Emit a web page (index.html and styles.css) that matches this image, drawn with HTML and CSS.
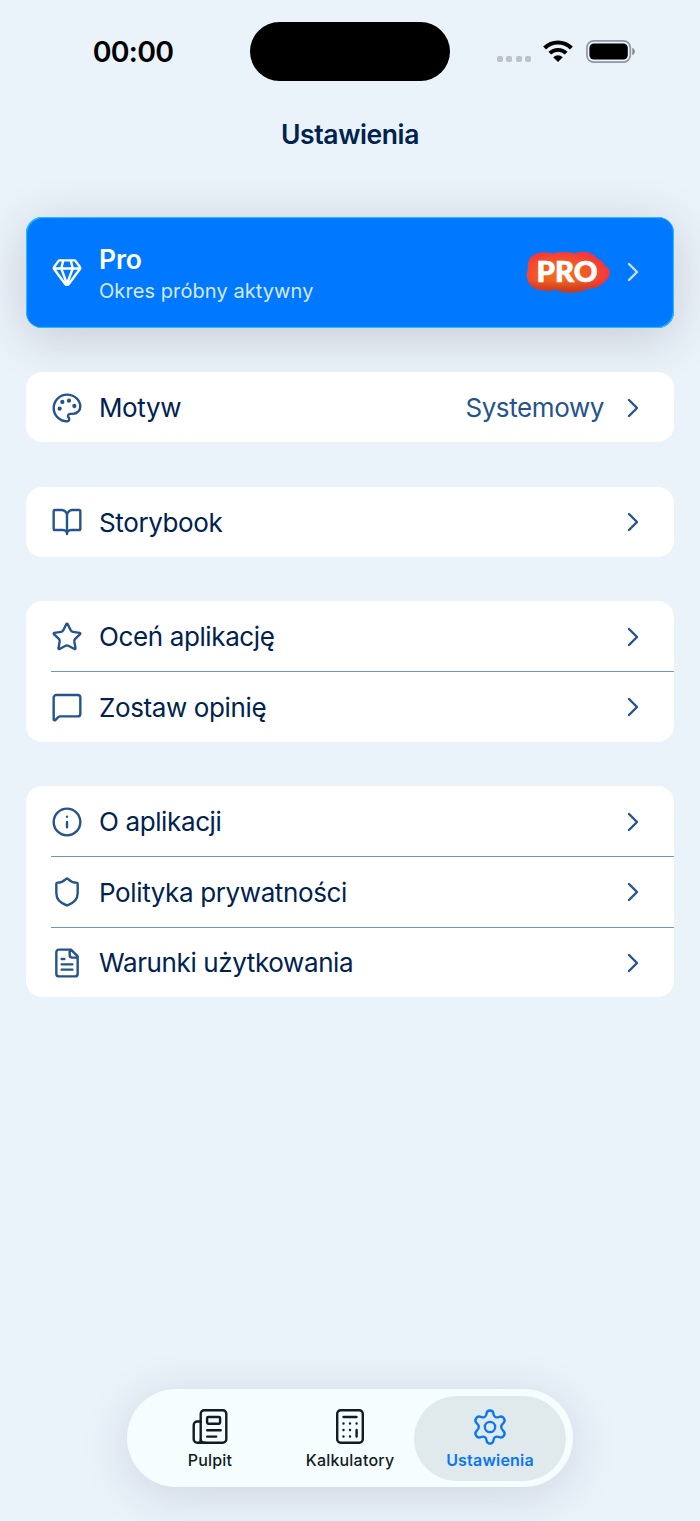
FILE: index.html
```
<!DOCTYPE html>
<html lang="pl">
<head>
<meta charset="utf-8">
<title>Ustawienia</title>
<link rel="stylesheet" href="styles.css">
</head>
<body>
<svg class="defs" width="0" height="0">
  <symbol id="chev" viewBox="0 0 12 20"><path d="M2 2l8 8-8 8"/></symbol>
</svg>
<div class="screen">
  <div class="status">
    <span class="time">00:00</span>
    <div class="island"></div>
    <div class="indicators">
      <div class="dots"><i></i><i></i><i></i><i></i></div>
      <svg class="wifi" viewBox="0 0 30 22" width="30" height="22">
        <path d="M1.6 8A19 19 0 0 1 28.4 8" stroke="#000" stroke-width="4.1" fill="none"/>
        <path d="M6.8 13.2A11.8 11.8 0 0 1 23.2 13.2" stroke="#000" stroke-width="3.9" fill="none"/>
        <path d="M10.2 17.2Q15 13.2 19.8 17.2L15 22z"/>
      </svg>
      <svg class="battery" viewBox="0 0 50 23" width="50" height="23">
        <rect x=".9" y=".9" width="43.4" height="21.2" rx="6.8" fill="none" stroke="#93989e" stroke-width="1.7"/>
        <rect x="3.4" y="3.4" width="38.4" height="16.2" rx="4.6"/>
        <path d="M46.3 7.8q2.6 1 2.6 3.7t-2.6 3.7z" fill="#83888e"/>
      </svg>
    </div>
  </div>
  <h1 class="title">Ustawienia</h1>

  <main class="list">
    <section class="pro">
      <svg class="icon" viewBox="0 0 24 24"><path d="M6 3.300h12l3.700 5a1.400 1.400 0 0 1 0 1.500L13.500 20.800a1.800 1.800 0 0 1-3 0L2.300 9.800a1.400 1.400 0 0 1 0-1.500zM2.200 9.400h19.600M9.200 3.300L7.700 9.400 12 21l4.300-11.600L14.800 3.300"/></svg>
      <div class="pro-copy">
        <strong class="pro-name">Pro</strong>
        <span class="pro-sub">Okres próbny aktywny</span>
      </div>
      <svg class="badge" viewBox="0 0 86 44" width="86" height="44">
        <defs>
          <radialGradient id="flame" cx=".42" cy=".54" r=".58">
            <stop offset="0" stop-color="#f6701c"/><stop offset=".5" stop-color="#f35a22"/><stop offset="1" stop-color="#f5343e"/>
          </radialGradient>
          <linearGradient id="shade" x1="0" y1="0" x2="0" y2="1">
            <stop offset=".7" stop-color="#b53a18" stop-opacity="0"/><stop offset="1" stop-color="#b53a18" stop-opacity=".85"/>
          </linearGradient>
          <path id="cloud" d="M3 19C1 9 9 1.500 20 2.200Q25 2.500 28 3.500Q39 .6 49 3.500C58 0 68 2 72 8.500Q78 10 79.500 15.500C84 17.500 86 22 84 26Q81.500 31.500 77 33.500Q74 38 67 38Q61 39 57.500 41Q42 45 31 39.500C22 42 8 41 4 33Q0 27 3 19z"/>
        </defs>
        <use href="#cloud" fill="url(#flame)"/><use href="#cloud" fill="url(#shade)"/>
        <text class="badge-text" x="11.500" y="32.300" textLength="61" lengthAdjust="spacingAndGlyphs">PRO</text>
      </svg>
      <svg class="chev"><use href="#chev"/></svg>
    </section>

    <section class="card">
      <div class="row">
        <svg class="icon" viewBox="0 0 24 24"><path d="M12 2C6.500 2 2 6.500 2 12s4.500 10 10 10c.926 0 1.648-.746 1.648-1.688 0-.437-.18-.835-.437-1.125-.29-.289-.438-.652-.438-1.125a1.640 1.640 0 0 1 1.668-1.668h1.996c3.051 0 5.555-2.503 5.555-5.554C21.965 6.012 17.461 2 12 2z"/><g class="solid"><circle cx="13.500" cy="6.500" r=".7"/><circle cx="17.500" cy="10.500" r=".7"/><circle cx="8.500" cy="7.500" r=".7"/><circle cx="6.500" cy="12.500" r=".7"/></g></svg>
        <span class="label">Motyw</span>
        <span class="value">Systemowy</span>
        <svg class="chev"><use href="#chev"/></svg>
      </div>
    </section>

    <section class="card">
      <div class="row">
        <svg class="icon" viewBox="0 0 24 24"><path d="M12 7v14M3 18a1 1 0 0 1-1-1V4a1 1 0 0 1 1-1h5a4 4 0 0 1 4 4 4 4 0 0 1 4-4h5a1 1 0 0 1 1 1v13a1 1 0 0 1-1 1h-6a3 3 0 0 0-3 3 3 3 0 0 0-3-3z"/></svg>
        <span class="label">Storybook</span>
        <svg class="chev"><use href="#chev"/></svg>
      </div>
    </section>

    <section class="card">
      <div class="row">
        <svg class="icon" viewBox="0 0 24 24"><path d="M11.525 2.295a.53.53 0 0 1 .95 0l2.310 4.679a2.123 2.123 0 0 0 1.595 1.160l5.166.756a.53.53 0 0 1 .294.904l-3.736 3.638a2.123 2.123 0 0 0-.611 1.878l.882 5.140a.53.53 0 0 1-.771.560l-4.618-2.428a2.122 2.122 0 0 0-1.973 0L6.396 21.010a.53.53 0 0 1-.770-.560l.881-5.139a2.122 2.122 0 0 0-.611-1.879L2.160 9.795a.53.53 0 0 1 .294-.906l5.165-.755a2.122 2.122 0 0 0 1.597-1.160z"/></svg>
        <span class="label">Oceń aplikację</span>
        <svg class="chev"><use href="#chev"/></svg>
      </div>
      <div class="row">
        <svg class="icon" viewBox="0 0 24 24"><path d="M22 17a2 2 0 0 1-2 2H6.828a2 2 0 0 0-1.414.586l-2.202 2.202A.71.71 0 0 1 2 21.286V5a2 2 0 0 1 2-2h16a2 2 0 0 1 2 2z"/></svg>
        <span class="label">Zostaw opinię</span>
        <svg class="chev"><use href="#chev"/></svg>
      </div>
    </section>

    <section class="card">
      <div class="row">
        <svg class="icon" viewBox="0 0 24 24"><circle cx="12" cy="12" r="10"/><path d="M12 16v-4M12 8h.01"/></svg>
        <span class="label">O aplikacji</span>
        <svg class="chev"><use href="#chev"/></svg>
      </div>
      <div class="row">
        <svg class="icon" viewBox="0 0 24 24"><path d="M20 13c0 5-3.500 7.500-7.660 8.950a1 1 0 0 1-.670-.010C7.500 20.500 4 18 4 13V6a1 1 0 0 1 1-1c2 0 4.500-1.200 6.240-2.720a1.170 1.170 0 0 1 1.520 0C14.510 3.810 17 5 19 5a1 1 0 0 1 1 1z"/></svg>
        <span class="label">Polityka prywatności</span>
        <svg class="chev"><use href="#chev"/></svg>
      </div>
      <div class="row">
        <svg class="icon" viewBox="0 0 24 24"><path d="M15 2H6a2 2 0 0 0-2 2v16a2 2 0 0 0 2 2h12a2 2 0 0 0 2-2V7zM14 2v4a2 2 0 0 0 2 2h4M10 9H8M16 13H8M16 17H8"/></svg>
        <span class="label">Warunki użytkowania</span>
        <svg class="chev"><use href="#chev"/></svg>
      </div>
    </section>
  </main>

  <nav class="tabs">
    <div class="tab">
      <svg class="tab-icon" viewBox="0 0 36 36"><rect x="8.700" y="1.200" width="25.600" height="32.600" rx="3.500"/><path d="M8.700 12.500H5.200A3.500 3.500 0 0 0 1.700 16v14.300a3.500 3.500 0 0 0 3.500 3.500h1A2.500 2.500 0 0 0 8.700 31.300M6 33.800h7M15.200 21.300H28.700M15.200 27.600h9"/><rect x="15.100" y="8" width="13" height="6.800" rx="1.200"/></svg>
      <span class="tab-label">Pulpit</span>
    </div>
    <div class="tab">
      <svg class="tab-icon" viewBox="0 0 36 36"><rect x="5.200" y="1.200" width="25.600" height="32.600" rx="3.500"/><path d="M11.500 8h13M24.600 21v6.600M11.500 14.500h.01M18 14.500h.01M24.600 14.500h.01M11.500 21h.01M18 21h.01M11.500 27.500h.01M18 27.500h.01"/></svg>
      <span class="tab-label">Kalkulatory</span>
    </div>
    <div class="tab active">
      <svg class="tab-icon gear" viewBox="1.200 1.200 21.600 21.600"><path d="M9.9 4.100C10.200 1.400 13.800 1.400 14.100 4.100C14.300 5.900 15.700 6.700 17.300 6C19.800 4.900 21.900 7.800 20 9.700C18.300 11.300 18.300 12.700 20 14.300C21.900 16.200 19.800 19.100 17.300 18C15.700 17.300 14.300 18.100 14.100 19.900C13.800 22.600 10.200 22.600 9.900 19.900C9.700 18.100 8.300 17.300 6.700 18C4.200 19.100 2.100 16.200 4 14.300C5.700 12.700 5.700 11.300 4 9.700C2.100 7.800 4.200 4.900 6.700 6C8.300 6.700 9.700 5.900 9.900 4.100z"/><circle cx="12" cy="12" r="3.100"/></svg>
      <span class="tab-label">Ustawienia</span>
    </div>
  </nav>
</div>
</body>
</html>
```
FILE: styles.css
```
* { box-sizing: border-box; }
body { margin: 0; background: #eaf2fa; font-family: Inter, "Liberation Sans", sans-serif; color: #00224f; }
.defs { position: absolute; }
.screen { width: 700px; height: 1521px; display: flex; flex-direction: column; overflow: hidden; }

.status { height: 103px; display: grid; grid-template-columns: 250px 200px 250px; align-items: center; flex: none; }
.time { color: #000; font-size: 28.500px; font-weight: 600; text-align: center; padding: 0 0 0 16px; letter-spacing: -.8px; }
.island { height: 58.500px; border-radius: 29.5px; background: #000; }
.indicators { display: flex; align-items: center; padding-left: 46.500px; }
.dots { display: flex; gap: 3.600px; width: 46.500px; padding-top: 15px; }
.dots i { width: 6px; height: 6px; border-radius: 2px; background: #bbc2c9; }
.wifi { margin-top: -1px; }
.battery { margin-left: 12.500px; }

.title { margin: 14px 0 0; height: 34px; line-height: 34px; text-align: center; font-size: 26.500px; font-weight: 600; letter-spacing: -.4px; }

.list { margin: 66px 26px 0; display: flex; flex-direction: column; gap: 44.600px; }
.pro { height: 110.500px; display: flex; align-items: center; padding: 0 35px 0 25px; border-radius: 16px; background: #0078ff; color: #fff;
  box-shadow: inset 1px 1px 1px #2cc4f3, inset -1px -1px 1px #2cc4f3, 0 9px 50px rgba(50, 50, 60, .2); }
.pro-copy { display: flex; flex-direction: column; gap: 1.500px; margin: 3px 0 0 16px; flex: 1; }
.pro-name { font-size: 26.500px; line-height: 34px; font-weight: 600; letter-spacing: -.2px; }
.pro-sub { font-size: 20px; line-height: 29px; color: #d6e9ff; letter-spacing: .08px; }
.badge { margin-right: 16px; }
.badge-text { font-family: Lato, sans-serif; font-weight: 900; font-size: 28px; fill: #fff; stroke: #fff; stroke-width: .7px; }

.card { background: #fff; border-radius: 16px; overflow: hidden; }
.row { height: 70px; display: flex; align-items: center; padding: 0 35px 0 25px; }
.row + .row { height: 70.500px; background: linear-gradient(#7095c2, #7095c2) 25px 0 / 100% 1px no-repeat; }
.label { flex: 1; margin: 2px 0 0 16px; font-size: 26px; line-height: 36px; letter-spacing: -.38px; white-space: nowrap; }
.value { font-size: 26px; line-height: 36px; margin: 2px 23px 0 0; color: #24548b; letter-spacing: -.4px; }
.icon { width: 32px; height: 32px; margin-top: 1px; flex: none; fill: none; stroke: #24548b; stroke-width: 1.800; stroke-linecap: round; stroke-linejoin: round; }
.icon .solid { fill: #24548b; }
.chev { width: 12px; height: 20px; margin-top: 1px; flex: none; fill: none; stroke: #24548b; stroke-width: 2.400; stroke-linecap: round; stroke-linejoin: round; }
.pro .icon { stroke: #fff; margin-top: 0; }
.pro .chev { stroke: #cbe3ff; margin-top: 0; }

.tabs { margin: auto auto 34px; width: 446px; height: 98px; border-radius: 49px; background: #f5fdff; padding: 6.500px 7px; display: flex;
  box-shadow: 0 8px 50px rgba(40, 50, 80, .14); justify-content: space-between; }
.tab { width: 152px; height: 85px; border-radius: 43px; display: flex; flex-direction: column; align-items: center; padding-top: 13.500px; color: #101c22; margin-right: -13px; }
.tab.active { background: #e0e9eb; color: #0a76f5; margin-right: 0; }
.tab-icon { width: 36px; height: 36px; fill: none; stroke: currentColor; stroke-width: 2.400; stroke-linecap: round; stroke-linejoin: round; }
.gear { stroke-width: 1.400; }
.tab-label { margin-top: 4.500px; font-size: 16px; line-height: 20px; font-weight: 500; letter-spacing: .2px; }
.active .tab-label { font-weight: 600; }
```
